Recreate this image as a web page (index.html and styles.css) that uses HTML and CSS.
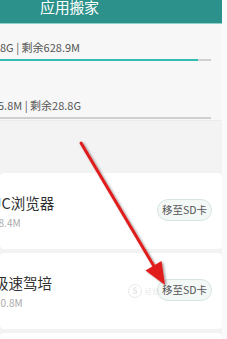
FILE: index.html
```html
<!DOCTYPE html>
<html lang="zh">
<head>
<meta charset="utf-8">
<link rel="stylesheet" href="styles.css">
</head>
<body>
<div class="page">
  <header class="header"><span class="title">应用搬家</span></header>
  <section class="storage">
    <div class="row first">
      <div class="info">8G | 剩余628.9M</div>
      <div class="bar"><div class="fill" style="width:94%"></div></div>
    </div>
    <div class="row second">
      <div class="info shift">5.8M | 剩余28.8G</div>
      <div class="bar"><div class="fill" style="width:0%"></div></div>
    </div>
  </section>
  <section class="list">
    <div class="card">
      <div class="meta">
        <div class="name uc">UC浏览器</div>
        <div class="size s1">28.4M</div>
      </div>
      <div class="btn">移至SD卡</div>
    </div>
    <div class="card">
      <div class="meta">
        <div class="name jp">极速驾培</div>
        <div class="size s2">10.8M</div>
      </div>
      <div class="btn">移至SD卡</div>
    </div>
    <div class="card"></div>
  </section>
</div>
<div class="watermark"><span class="wm-logo">S</span><span class="wm-text">经验</span></div>
<svg class="arrow" width="227" height="339" viewBox="0 0 227 339">
  <defs>
    <filter id="sh" x="-20%" y="-20%" width="140%" height="140%">
      <feDropShadow dx="1.5" dy="1" stdDeviation="1.2" flood-color="#000" flood-opacity="0.4"/>
    </filter>
  </defs>
  <g filter="url(#sh)">
    <line x1="81" y1="143" x2="155" y2="268" stroke="#e01c1c" stroke-width="3" stroke-linecap="round"/>
    <polygon points="165,285 161.5,261 145.5,270.5" fill="#e01c1c"/>
  </g>
</svg>
</body>
</html>
```

FILE: styles.css
```css
html, body {
  margin: 0;
  padding: 0;
}
body {
  width: 227px;
  height: 339px;
  overflow: hidden;
  background: #fafafa;
  font-family: "Noto Sans CJK SC", "Noto Sans", sans-serif;
  position: relative;
}
.page {
  width: 222px;
  height: 339px;
  background: #f3f3f3;
  overflow: hidden;
}
.header {
  height: 23px;
  background: #2b918a;
  border-bottom: 1px solid #8fd0cb;
  overflow: hidden;
}
.title {
  display: block;
  padding-left: 40px;
  margin-top: -2px;
  font-size: 15px;
  line-height: 18px;
  color: #ffffff;
  letter-spacing: -0.3px;
}
.storage {
  background: #f7f7f7;
  height: 96px;
  border-bottom: 1px solid #ececec;
  overflow: hidden;
}
.row.first {
  padding-top: 16px;
}
.row.second {
  padding-top: 37px;
}
.info {
  font-size: 11px;
  line-height: 14px;
  color: #555555;
  white-space: nowrap;
}
.info.shift {
  margin-left: -2px;
}
.bar {
  width: 211px;
  height: 2px;
  margin-top: 5px;
  background: #cfcfcf;
}
.fill {
  height: 2px;
  background: #35bcb2;
}
.list {
  padding-top: 52px;
  display: flex;
  flex-direction: column;
  gap: 4px;
}
.card {
  height: 76px;
  box-sizing: border-box;
  background: #ffffff;
  border-radius: 4px;
  padding: 21px 10px 0 0;
  display: flex;
  justify-content: space-between;
  align-items: flex-start;
  box-shadow: 0 0 1px rgba(0,0,0,0.06);
}
.meta {
  display: flex;
  flex-direction: column;
  gap: 4px;
}
.name {
  font-size: 14.5px;
  line-height: 18px;
  color: #2f2f2f;
  white-space: nowrap;
}
.name.uc {
  margin-left: -9px;
}
.name.jp {
  margin-left: -6px;
}
.size {
  font-size: 10px;
  line-height: 14px;
  color: #aaaaaa;
  white-space: nowrap;
}
.size.s1 {
  margin-left: -7px;
}
.size.s2 {
  margin-left: -5px;
}
.btn {
  margin-top: 5px;
  width: 55px;
  height: 22px;
  box-sizing: border-box;
  border: 1px solid #d6e6e3;
  background: #f3f8f7;
  border-radius: 11px;
  font-size: 10.5px;
  line-height: 20px;
  color: #555555;
  text-align: center;
  white-space: nowrap;
}
.watermark {
  position: absolute;
  left: 128px;
  top: 284px;
  display: flex;
  align-items: center;
  gap: 3px;
  opacity: 0.35;
}
.wm-logo {
  width: 12px;
  height: 12px;
  border: 1.5px solid #bbbbbb;
  border-radius: 50%;
  font-size: 9px;
  line-height: 12px;
  text-align: center;
  color: #bbbbbb;
  font-weight: bold;
}
.wm-text {
  font-size: 7px;
  line-height: 10px;
  color: #bbbbbb;
}
.arrow {
  position: absolute;
  left: 0;
  top: 0;
}
```
